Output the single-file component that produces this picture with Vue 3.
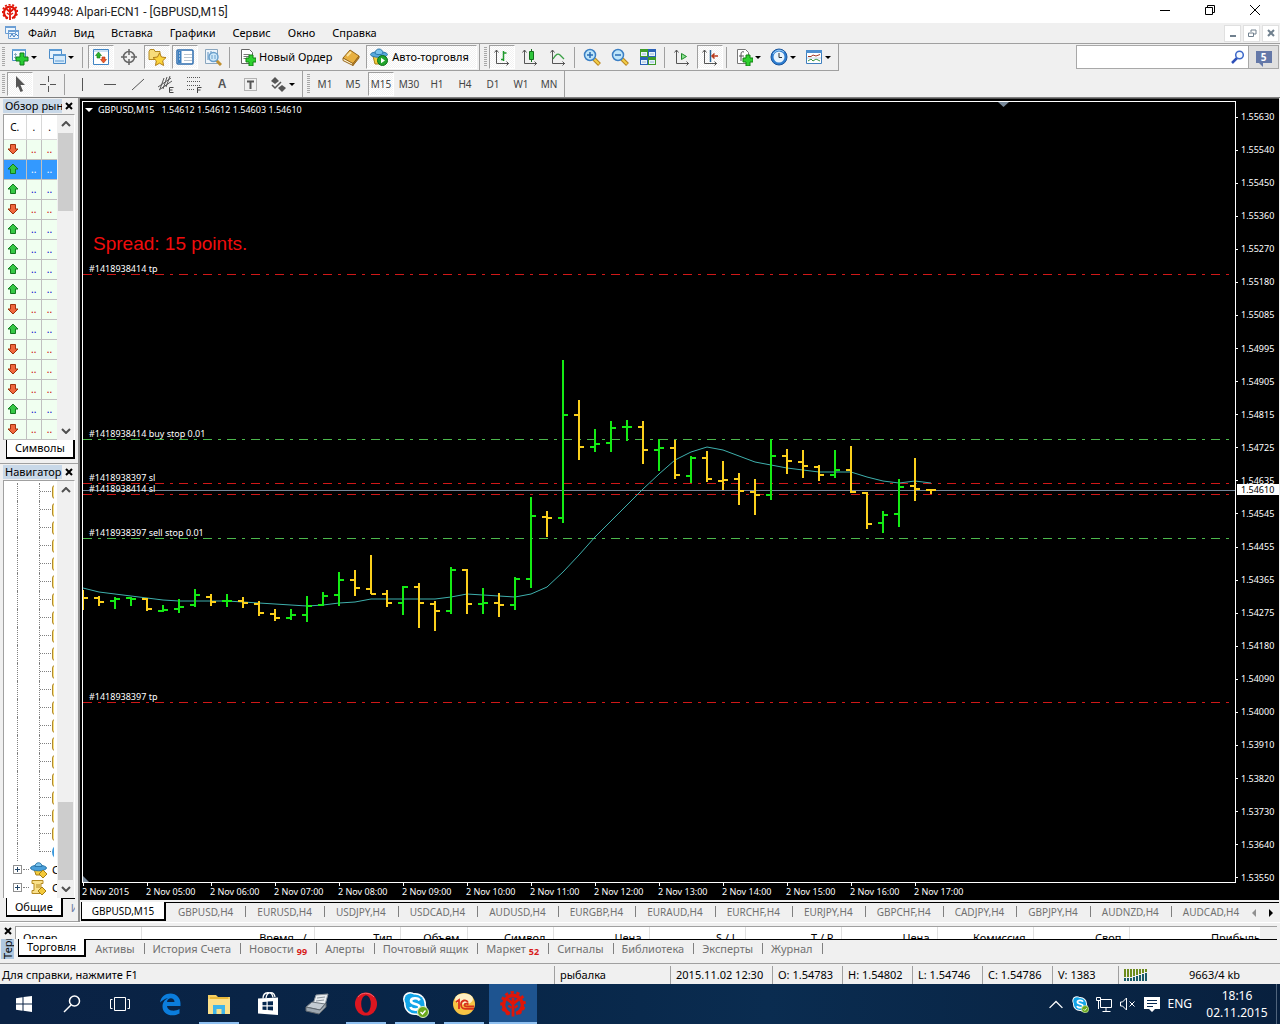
<script setup>
const arrowDown = '<path d="M0 0h6L3 3z" fill="#000"/>'

const axes = '<path d="M3.5 2v13.5H16M1.5 4.5l2-2.5 2 2.5M13.5 13.5l2 2-2 2" fill="none" stroke="#555"/>'
const doc = '<path d="M3.5 1.5h8l3 3v11h-11z" fill="#fff" stroke="#666"/><path d="M5.500 6.500h6M5.500 8.500h6M5.500 10.500h4" stroke="#777"/>'
const plus = '<path d="M11 7h4v3h3v4h-3v4h-4v-4H8v-4h3z" fill="#2ed02e" stroke="#108010"/>'
const lens = '<path d="M11 11l5.500 5.500" stroke="#b98420" stroke-width="4"/><path d="M11 11l5 5" stroke="#f2cf4a" stroke-width="2"/><circle cx="7" cy="7" r="5.500" fill="#bfe6fa" stroke="#3b7fc4" stroke-width="1.500"/>'

const icons = {
  newChart: '<path d="M1.500 1.500h13v11h-13z" fill="#f4faff" stroke="#4b8cc8"/><path d="M1 1h14v2H1z" fill="#6aa5d8"/><path d="M4.500 5v6M3 6.500h3M3 9.500h9" stroke="#8ab" /><path d="M9 5h4v4h4v4h-4v4H9v-4H5V9h4z" fill="#27cc33" stroke="#0d7d18"/>',
  profiles: '<path d="M1.500 1.500h12v9h-12z" fill="#e6f2fc" stroke="#4b8cc8"/><path d="M1 1h13v2H1z" fill="#5c9bd4"/><path d="M5.500 6.500h12v9h-12z" fill="#d6eafa" stroke="#4b8cc8"/><path d="M5 6h13v2H5z" fill="#5c9bd4"/><path d="M7 13h9" stroke="#5c9bd4"/>',
  market: '<path d="M1.500 1.500h15v15h-15z" fill="#fff" stroke="#3f84c4"/><path d="M2 3h14" stroke="#9cc6ea"/><path d="M6.500 4l3 3.500h-1.500V10h-3V7.500H3.500z" fill="#2bb52b" stroke="#15751a" stroke-width=".6"/><path d="M11.500 15l-3-3.500H10V9h3v2.500h1.500z" fill="#f0592a" stroke="#a4330d" stroke-width=".6"/>',
  target: '<circle cx="9" cy="9" r="5.500" fill="none" stroke="#666" stroke-width="1.500"/><path d="M9 1v6M9 11v6M1 9h6M11 9h6" stroke="#666" stroke-width="1.500"/>',
  star: '<path d="M1 3.500l1-2h4l1 2h5v8H1z" fill="#f7dc7a" stroke="#b58a22"/><path d="M11.500 5l2 4 4.500.6-3.300 3.200.9 4.700-4.100-2.300-4 2.300.8-4.700L5 9.600 9.500 9z" fill="#fbd43c" stroke="#b27d14"/>',
  list: '<rect x="1" y="2" width="16" height="14" rx="1" fill="#fff" stroke="#2c6cae" stroke-width="1.500"/><path d="M2 3h3.500v12H2z" fill="#3b7fc0"/><path d="M8 6.500h8M8 9.500h8M8 12.500h8" stroke="#b9c4cf"/><path d="M3 5h1M3 8h1M3 11h1" stroke="#fff"/>',
  tester: '<path d="M1.500 1.500h12v14h-12z" fill="#eef5fb" stroke="#8aa6be"/><path d="M4 4v8M7 3v5M10 4v3" stroke="#5b8fc0"/><path d="M12 12l5 5" stroke="#c09030" stroke-width="3"/><circle cx="9.500" cy="9" r="4.500" fill="#cfe9fa" stroke="#6aa0cc" stroke-width="1.500"/><path d="M8 7v4M11 7v4" stroke="#6aa0cc"/>',
  order: doc + plus,
  book: '<path d="M1 10l7-8 9 6-6 8z" fill="#e8b040" stroke="#96661a"/><path d="M1 10v2.500l10 5v-2z" fill="#fff3cf" stroke="#96661a"/><path d="M11 17.500l6-7.500V8l-6 7.500z" fill="#c48a25" stroke="#96661a"/><path d="M5 8l4-4" stroke="#fbe29a" stroke-width="2"/>',
  robot: '<path d="M3 8l2 8h8l2-8z" fill="#f4cb3a" stroke="#a67f16"/><ellipse cx="9" cy="6.500" rx="8.500" ry="2.800" fill="#58a9dc" stroke="#2b78ac"/><path d="M5 5.500c0-6 8-6 8 0-2 1.500-6 1.500-8 0z" fill="#7cc3ec" stroke="#2b78ac"/><circle cx="12.500" cy="12.500" r="5" fill="#21a52d" stroke="#0d6e18"/><path d="M11 9.800v5.400l4-2.700z" fill="#fff"/>',
  bars: axes + '<path d="M10.500 3v10M10.500 5h3M8 11.500h2.500" stroke="#1f9a2c" stroke-width="1.500" fill="none"/>',
  candles: axes + '<path d="M10.500 1v13" stroke="#14701c"/><path d="M8.500 3.500h4v8h-4z" fill="#2fc63c" stroke="#14701c"/>',
  line: axes + '<path d="M4 11c3-5 5-6 7-4l4 4" stroke="#3aa046" fill="none" stroke-width="1.300"/>',
  zoomIn: lens + '<path d="M4 7h6M7 4v6" stroke="#2b6cb4" stroke-width="1.500"/>',
  zoomOut: lens + '<path d="M4 7h6" stroke="#2b6cb4" stroke-width="1.500"/>',
  tile: '<path d="M1 1h8v8H1z" fill="#3d9c2a"/><path d="M9 1h8v8H9z" fill="#2b62b8"/><path d="M1 9h8v8H1z" fill="#2b62b8"/><path d="M9 9h8v8H9z" fill="#3d9c2a"/><path d="M2 4h6v4H2zM10 4h6v4h-6zM2 12h6v4H2zM10 12h6v4h-6z" fill="#e9f3fc"/><path d="M3 6h4M11 6h4M3 14h4M11 14h4" stroke="#9bb8d4"/>',
  scroll: axes + '<path d="M8.500 5.500v6l5-3z" fill="#8be08f" stroke="#1f8a2a"/>',
  shift: axes + '<path d="M9.500 2v12" stroke="#2a6597" stroke-width="1.500"/><path d="M17 8h-6M13.500 5.500L11 8l2.500 2.500" stroke="#b83a1c" fill="none" stroke-width="1.500"/>',
  indicator: '<path d="M2.500 1.500h8l3 3v11h-11z" fill="#fff" stroke="#777"/><path d="M9 4c-3-1-3 1-3 4v5M4 8h5" stroke="#555" fill="none"/>' + plus,
  clock: '<circle cx="9" cy="9" r="8" fill="#2d7dd0" stroke="#1a559c"/><circle cx="9" cy="9" r="5.500" fill="#e8f4fd"/><path d="M9 5v4.500h3" stroke="#333" fill="none"/><path d="M3 6a7 7 0 0 1 11-2" stroke="#9fd0f6" fill="none"/>',
  template: '<path d="M1.500 2.500h15v13h-15z" fill="#fff" stroke="#3f7fbe"/><path d="M1 2h16v3H1z" fill="#4d8fcf"/><path d="M3 8.500h3l2-1.500 3 1 4-1.500" stroke="#a03828" fill="none"/><path d="M3 13l3-2 2 2 3-2 4 2" stroke="#38923c" fill="none"/><path d="M2 10h14" stroke="#c4d4e4"/>',
  cursor: '<path d="M5 1l9 9H9.500l2.500 6-2.500 1L7 11.200 5 13z" fill="#555"/>',
  cross: '<path d="M9.500 1v6M9.500 11v6M1 9.500h6M11 9.500h6" stroke="#555"/>',
  vline: '<path d="M9.500 3v13" stroke="#555"/>',
  hline: '<path d="M3 9.500h12" stroke="#555"/>',
  trend: '<path d="M3 15L15 4" stroke="#555"/>',
  channel: '<path d="M1 12L14 3M2 15L15 6M3 14L7 3M6 14L10 2M9 12L13 1" stroke="#555"/><path d="M16.500 12.500h-4v5h4M12.500 15h3" stroke="#444" fill="none"/>',
  fibo: '<path d="M2 2.500h13M2 6.500h13M2 10.500h13M2 14.500h8" stroke="#555" stroke-dasharray="1 1"/><path d="M16.500 12.500h-4V18M12.500 15h3" stroke="#444" fill="none"/>',
  label: '<path d="M3.500 3.500h12v12h-12z" fill="none" stroke="#777" stroke-dasharray="1 1"/><path d="M6 6.500h7M9.500 6v8" stroke="#555" stroke-width="2"/>',
  shapes: '<path d="M2 6l4-4 4 4-4 3z" fill="#555"/><path d="M9 13l4-3 4 3-4 4z" fill="#555"/><path d="M3 10l3 3 6-6" stroke="#555" stroke-width="1.500" fill="none"/>',
}

const logo = '<path d="M8 8V16M8 8L4.500 5M8 8l3.500-3M8 4v3" stroke="#e01508" stroke-width="1.800"/><path d="M6 14.200a6 6 0 1 1 4 0" fill="none" stroke="#e01508" stroke-width="2.200"/><path d="M5.300 14.600a7.300 7.300 0 1 1 5.400 0" fill="none" stroke="#e01508" stroke-width="1.800" stroke-dasharray="2 1.700"/><path d="M5 9l2 1.500M11 9l-2 1.500" stroke="#e01508" stroke-width="1.400"/>'

const menu = ['Файл', 'Вид', 'Вставка', 'Графики', 'Сервис', 'Окно', 'Справка']

const panelButtons = [
  { icon: 'market', on: true, label: 'Обзор рынка' },
  { icon: 'target', label: 'Окно данных' },
  { icon: 'star', on: true, label: 'Навигатор' },
  { icon: 'list', on: true, label: 'Терминал' },
  { icon: 'tester', label: 'Тестер стратегий' },
]
const styleButtons = [
  { icon: 'bars', on: true, label: 'Бары' },
  { icon: 'candles', label: 'Свечи' },
  { icon: 'line', label: 'Линия' },
]
const zoomButtons = [
  { icon: 'zoomIn', label: 'Увеличить' },
  { icon: 'zoomOut', label: 'Уменьшить' },
  { icon: 'tile', label: 'Окна мозаикой' },
]
const shiftButtons = [
  { icon: 'scroll', label: 'Автопрокрутка' },
  { icon: 'shift', on: true, label: 'Сдвиг графика' },
]
const dropButtons = [
  { icon: 'indicator', label: 'Индикаторы' },
  { icon: 'clock', label: 'Периоды' },
  { icon: 'template', label: 'Шаблоны' },
]
const drawButtons = ['vline', 'hline', 'trend', 'channel', 'fibo', 'text', 'label', 'shapes']
const periods = ['M1', 'M5', 'M15', 'M30', 'H1', 'H4', 'D1', 'W1', 'MN']

const symbols = 'duuduuuududddud'.split('').map((dir, i) => ({ up: dir === 'u', selected: i === 1 }))
const folders = 20

const prices = [
  '1.55630', '1.55540', '1.55450', '1.55360', '1.55270', '1.55180', '1.55085', '1.54995',
  '1.54905', '1.54815', '1.54725', '1.54635', '1.54545', '1.54455', '1.54365', '1.54275',
  '1.54180', '1.54090', '1.54000', '1.53910', '1.53820', '1.53730', '1.53640', '1.53550',
]
const times = [
  '2 Nov 2015', '2 Nov 05:00', '2 Nov 06:00', '2 Nov 07:00', '2 Nov 08:00', '2 Nov 09:00', '2 Nov 10:00',
  '2 Nov 11:00', '2 Nov 12:00', '2 Nov 13:00', '2 Nov 14:00', '2 Nov 15:00', '2 Nov 16:00', '2 Nov 17:00',
]

// Bars: high, low, open, close (plot offset), rising
const TOP = 102
const STEP = 16
const rawBars = [
  [590, 610, 598, 598, 0], [596, 606, 598, 602, 0], [597, 609, 601, 599, 1], [597, 606, 598, 599, 1],
  [598, 611, 599, 609, 0], [605, 612, 611, 610, 1], [599, 613, 609, 607, 1], [589, 607, 605, 595, 1],
  [594, 606, 597, 602, 0], [594, 607, 601, 601, 1], [597, 608, 601, 603, 0], [601, 616, 604, 613, 0],
  [609, 621, 614, 618, 0], [609, 620, 618, 615, 1], [596, 622, 615, 606, 1], [592, 606, 605, 596, 1],
  [572, 606, 595, 580, 1], [570, 596, 580, 588, 0], [555, 594, 589, 594, 0], [590, 607, 594, 603, 0],
  [586, 615, 603, 587, 1], [583, 628, 587, 603, 0], [601, 631, 604, 611, 0], [567, 614, 611, 570, 1],
  [569, 614, 570, 604, 0], [588, 614, 604, 603, 1], [593, 617, 603, 605, 0], [577, 610, 605, 579, 1],
  [497, 588, 579, 516, 1], [511, 537, 517, 518, 0], [360, 523, 518, 415, 1], [400, 460, 415, 447, 0],
  [429, 452, 447, 444, 1], [421, 452, 443, 428, 1], [420, 441, 427, 427, 1], [421, 464, 427, 450, 0],
  [439, 471, 450, 448, 1], [440, 479, 448, 475, 0], [456, 483, 476, 458, 1], [451, 482, 458, 479, 0],
  [461, 490, 481, 480, 0], [473, 505, 479, 491, 0], [479, 515, 492, 495, 0], [439, 500, 495, 456, 1],
  [449, 474, 456, 461, 0], [450, 478, 462, 466, 0], [465, 481, 467, 475, 0], [450, 478, 475, 470, 1],
  [446, 493, 470, 492, 0], [492, 529, 493, 524, 0], [511, 533, 523, 515, 1], [479, 527, 514, 487, 1],
  [458, 501, 486, 489, 0], [490, 494, 490, 490, 0],
]
const bars = rawBars.map(([high, low, open, close, up], i) => {
  const x = i * STEP
  return {
    d: `M${x} ${high - TOP}V${low - TOP}M${x - 5} ${open - TOP}H${x}M${x} ${close - TOP}H${x + 5}`,
    color: up ? '#14eb14' : '#fbd01c',
  }
})
const average = [
  588, 592, 594, 596, 598, 600, 601, 601, 601, 601, 602, 603, 604, 605, 606, 605, 603, 602, 599, 599, 599,
  599, 599, 597, 594, 595, 596, 597, 594, 587, 572, 555, 537, 521, 505, 489, 474, 460, 452, 447, 450, 456,
  462, 465, 468, 470, 472, 472, 472, 477, 481, 483, 481, 483,
]
const averagePoints = average.map((y, i) => `${i * STEP},${y - TOP}`).join(' ')

const orders = [
  { text: '#1418938414 tp', y: 172, color: '#d01818' },
  { text: '#1418938414 buy stop 0.01', y: 337, color: '#4cb84c' },
  { text: '#1418938397 sl', y: 381, color: '#d01818' },
  { text: '#1418938414 sl', y: 392, color: '#d01818' },
  { text: '#1418938397 sell stop 0.01', y: 436, color: '#4cb84c' },
  { text: '#1418938397 tp', y: 600, color: '#d01818' },
]

const charts = [
  'GBPUSD,H4', 'EURUSD,H4', 'USDJPY,H4', 'USDCAD,H4', 'AUDUSD,H4', 'EURGBP,H4', 'EURAUD,H4',
  'EURCHF,H4', 'EURJPY,H4', 'GBPCHF,H4', 'CADJPY,H4', 'GBPJPY,H4', 'AUDNZD,H4', 'AUDCAD,H4',
]
const columns = [
  { name: 'Ордер', w: 125 }, { name: 'Время   /', w: 173 }, { name: 'Тип', w: 86 }, { name: 'Объем', w: 67 },
  { name: 'Символ', w: 86 }, { name: 'Цена', w: 96 }, { name: 'S / L', w: 96 }, { name: 'T / P', w: 96 },
  { name: 'Цена', w: 96 }, { name: 'Комиссия', w: 96 }, { name: 'Своп', w: 96 },
]
const sections = [
  { name: 'Активы' }, { name: 'История Счета' }, { name: 'Новости', badge: 99 }, { name: 'Алерты' },
  { name: 'Почтовый ящик' }, { name: 'Маркет', badge: 52 }, { name: 'Сигналы' }, { name: 'Библиотека' },
  { name: 'Эксперты' }, { name: 'Журнал' },
]

const skype = '<circle cx="9" cy="9" r="7" fill="#fff"/><circle cx="19" cy="19" r="7" fill="#fff"/><circle cx="14" cy="14" r="11" fill="#fff"/><circle cx="9.500" cy="9.500" r="6" fill="#12a5e8"/><circle cx="18" cy="18" r="6" fill="#12a5e8"/><circle cx="14" cy="14" r="9.500" fill="#12a5e8"/><path d="M18.500 10.500c-1-3-8.500-3-8.500.5 0 4 8.500 2 8.500 6 0 3.500-8 3.500-9 0" fill="none" stroke="#fff" stroke-width="2.600"/><circle cx="22" cy="22" r="5.500" fill="#6aa81c" stroke="#d7ecc0"/><path d="M19.500 22l2 2 3-3.500" fill="none" stroke="#fff" stroke-width="1.300"/>'

const apps = [
  { label: 'Edge', svg: '<path d="M4 12.500C5 6.500 9.500 3.500 14.500 3.500c6 0 10 4.500 10 10v2.500H11c.3 5 7.500 6 12.500 3v4.500c-7.500 4-17 1.500-17-7 0-4 2.500-7 5.500-8.500-3.500 1-6.500 2.700-8 4.500zM11 12h7.500c0-5-7-5-7.500 0z" fill="#0b7ddc"/>' },
  { label: 'Проводник', running: true, svg: '<path d="M3 5h8l2 2h12v17H3z" fill="#f5cf63"/><path d="M3 9h22v15H3z" fill="#fbe08b"/><path d="M5 7h18v2H5z" fill="#e9b93a"/><path d="M8 24v-9h12v9h-3.500v-5h-5v5z" fill="#3eb5ea"/>' },
  { label: 'Магазин', svg: '<path d="M4 8.500l20-1V25L4 23.500z" fill="#fff"/><path d="M9 8.500c0-7 9-8 10-1M12 8c1-7 8-7 9-1" fill="none" stroke="#fff" stroke-width="1.300"/><path d="M8.500 12l4-.3v3.600h-4zM13.700 11.600l5.300-.4v4.100h-5.300zM8.500 16.400h4V20l-4-.3zM13.700 16.400H19v4.200l-5.300-.5z" fill="#04274f"/>' },
  { label: 'Сканер', svg: '<path d="M13 5l12-1-3 11-13 2z" fill="#e8ecef" stroke="#8b949c"/><path d="M3 17l6-5 13 2-5 6z" fill="#c3cbd2" stroke="#6c757d"/><path d="M3 17v4l13 3 7-7v-4l-6 7z" fill="#9da7b0" stroke="#60686f"/><path d="M14 8l8-1M13 11l8-1" stroke="#8b949c"/>' },
  { label: 'Opera', running: true, svg: '<ellipse cx="14" cy="14" rx="11" ry="11.500" fill="#dc1620"/><ellipse cx="14" cy="14" rx="4.800" ry="8.800" fill="#082247"/><path d="M6 7c3-5 12-5 16 0" stroke="#f4606a" fill="none"/>' },
  { label: 'Skype', running: true, svg: skype },
  { label: '1C', running: true, svg: '<circle cx="14" cy="14" r="11" fill="#f6c344"/><ellipse cx="14" cy="9" rx="9" ry="5.500" fill="#fdf0c4"/><path d="M6 12l3-2v9M18 12.500c-1.500-3.500-7-2.500-7 2s3.500 4.300 5 4.300h8M18.500 14.500c-1-1-4-1.500-4 .5 0 1.500 1.500 1.500 2.500 1.500h7" fill="none" stroke="#d8301c" stroke-width="1.800"/>' },
]
</script>

<template>
  <div class="desktop">
    <header class="title-bar">
      <svg class="logo" viewBox="0 0 16 16" v-html="logo" />
      <h1>1449948: Alpari-ECN1 - [GBPUSD,M15]</h1>
      <div class="window-buttons">
        <button aria-label="Свернуть"><svg viewBox="0 0 12 12"><path d="M1 6.500h10" /></svg></button>
        <button aria-label="Развернуть"><svg viewBox="0 0 12 12"><path d="M1.500 3.500h7v7h-7zM3.500 3V1.500h7v7H9" /></svg></button>
        <button aria-label="Закрыть"><svg viewBox="0 0 12 12"><path d="M1 1l10 10M11 1L1 11" /></svg></button>
      </div>
    </header>

    <nav class="menu-bar">
      <svg class="menu-icon" viewBox="0 0 16 16"><path d="M1.500 1.500h10v7h-10zM4.500 5.500h10v8h-10z" fill="#eef6fd" stroke="#6d9fd4" /><path d="M4 5h11v2H4zM1 1h11v2H1z" fill="#6d9fd4" /><path d="M6 12l2-3 2 3 2-3 2 2" fill="none" stroke="#3f7cc0" /></svg>
      <button v-for="m in menu" :key="m">{{ m }}</button>
      <div class="child-buttons">
        <button aria-label="Свернуть график"><svg viewBox="0 0 10 10"><path d="M2 8h6" /></svg></button>
        <button aria-label="Восстановить график"><svg viewBox="0 0 10 10"><path d="M1.500 5h5v3.500h-5zM4 4V2h5v4H7" class="thin" /></svg></button>
        <button aria-label="Закрыть график"><svg viewBox="0 0 10 10"><path d="M2 2l6 6M8 2L2 8" /></svg></button>
      </div>
    </nav>

    <div class="tool-area">
      <div class="bar main-bar">
        <i class="grip" />
        <button class="tool" aria-label="Новый график"><svg viewBox="0 0 18 18" v-html="icons.newChart" /></button>
        <button class="caret" aria-label="Ещё"><svg viewBox="0 0 6 3" v-html="arrowDown" /></button>
        <button class="tool gap" aria-label="Профили"><svg viewBox="0 0 18 18" v-html="icons.profiles" /></button>
        <button class="caret" aria-label="Ещё"><svg viewBox="0 0 6 3" v-html="arrowDown" /></button>
        <i class="sep" />
        <button v-for="b in panelButtons" :key="b.icon" class="tool" :class="{ on: b.on }" :aria-label="b.label"><svg viewBox="0 0 18 18" v-html="icons[b.icon]" /></button>
        <i class="sep" />
        <button class="tool wide"><svg viewBox="0 0 18 18" v-html="icons.order" />Новый Ордер</button>
        <button class="tool" aria-label="Редактор"><svg viewBox="0 0 18 18" v-html="icons.book" /></button>
        <button class="tool wide auto on"><svg viewBox="0 0 18 18" v-html="icons.robot" />Авто-торговля</button>
        <i class="edge" />
        <i class="grip" />
        <button v-for="b in styleButtons" :key="b.icon" class="tool" :class="{ on: b.on }" :aria-label="b.label"><svg viewBox="0 0 18 18" v-html="icons[b.icon]" /></button>
        <i class="sep" />
        <button v-for="b in zoomButtons" :key="b.icon" class="tool" :aria-label="b.label"><svg viewBox="0 0 18 18" v-html="icons[b.icon]" /></button>
        <i class="sep" />
        <button v-for="b in shiftButtons" :key="b.icon" class="tool" :class="{ on: b.on }" :aria-label="b.label"><svg viewBox="0 0 18 18" v-html="icons[b.icon]" /></button>
        <i class="sep" />
        <template v-for="b in dropButtons" :key="b.icon">
          <button class="tool" :aria-label="b.label"><svg viewBox="0 0 18 18" v-html="icons[b.icon]" /></button>
          <button class="caret" aria-label="Ещё"><svg viewBox="0 0 6 3" v-html="arrowDown" /></button>
        </template>
        <i class="edge" />
      </div>
      <div class="search">
        <input type="text" aria-label="Поиск" />
        <svg class="search-icon" viewBox="0 0 14 14"><path d="M1 13l5-5" stroke="#2e50b8" stroke-width="2.500" /><circle cx="8.500" cy="5" r="3.800" fill="#f4f9ff" stroke="#3d68c8" stroke-width="1.500" /></svg>
        <button class="chat" aria-label="Сообщения"><span>5</span></button>
      </div>
      <div class="bar draw-bar">
        <i class="grip" />
        <button class="tool on" aria-label="Курсор"><svg viewBox="0 0 18 18" v-html="icons.cursor" /></button>
        <button class="tool" aria-label="Перекрестие"><svg viewBox="0 0 18 18" v-html="icons.cross" /></button>
        <i class="sep" />
        <button v-for="d in drawButtons" :key="d" class="tool" :aria-label="d">
          <b v-if="d === 'text'">A</b>
          <svg v-else viewBox="0 0 18 18" v-html="icons[d]" />
        </button>
        <button class="caret" aria-label="Ещё"><svg viewBox="0 0 6 3" v-html="arrowDown" /></button>
        <i class="edge" />
        <i class="grip" />
        <button v-for="p in periods" :key="p" class="tool period" :class="{ on: p === 'M15' }">{{ p }}</button>
        <i class="edge" />
      </div>
    </div>

    <main class="workspace">
      <aside class="side">
        <section class="panel">
          <div class="panel-title"><h2>Обзор рынка</h2><button aria-label="Закрыть"><svg viewBox="0 0 8 8"><path d="M1 1l6 6M7 1L1 7" /></svg></button></div>
          <div class="panel-body">
            <table class="symbols">
              <thead><tr><th>С.</th><th>.</th><th>.</th></tr></thead>
              <tbody>
                <tr v-for="(s, i) in symbols" :key="i" :class="{ selected: s.selected, up: s.up }">
                  <td><svg viewBox="0 0 12 12"><path v-if="s.up" d="M6 1l5 5H8.500v4.500h-5V6H1z" fill="#35c845" stroke="#127a20" /><path v-else d="M6 11L1 6h2.500V1.500h5V6H11z" fill="#f0683c" stroke="#a0320e" /></svg></td>
                  <td>..</td><td>..</td>
                </tr>
              </tbody>
            </table>
            <div class="scroll"><svg viewBox="0 0 10 6"><path d="M1 5l4-4 4 4" /></svg><i class="thumb" /><i class="rest" /><svg viewBox="0 0 10 6"><path d="M1 1l4 4 4-4" /></svg></div>
          </div>
          <div class="tabs side-tabs"><button class="tab active">Символы</button><i class="tab-line" /></div>
        </section>
        <section class="panel grow">
          <div class="panel-title"><h2>Навигатор</h2><button aria-label="Закрыть"><svg viewBox="0 0 8 8"><path d="M1 1l6 6M7 1L1 7" /></svg></button></div>
          <div class="panel-body">
            <ul class="tree">
              <li v-for="n in folders" :key="n" class="leaf"><i class="folder" /></li>
              <li class="leaf last"><i class="globe" /></li>
              <li class="node"><i class="plus" /><i class="dots" /><svg viewBox="0 0 18 18"><path d="M4 8l2 6h6l2-6z" fill="#f4cb3a" stroke="#a67f16" /><ellipse cx="8.500" cy="7" rx="8" ry="2.800" fill="#4a9fda" stroke="#2b78ac" /><path d="M5 5.500c0-5 7-5 7 0z" fill="#7cc3ec" stroke="#2b78ac" /><path d="M13 9l4 4-4 4-4-4z" fill="#f4c93a" stroke="#a67f16" /></svg>С</li>
              <li class="node"><i class="plus" /><i class="dots" /><svg viewBox="0 0 18 18"><path d="M2 1.500h11v3h-2v7h2v3H2v-3h2v-7H2z" fill="#f9e08a" stroke="#b58a22" /><path d="M6 6h4M6 8h4" stroke="#b58a22" /><path d="M12 8l4 4-4 4-4-4z" fill="#f4c93a" stroke="#a67f16" /></svg>С</li>
            </ul>
            <div class="scroll"><svg viewBox="0 0 10 6"><path d="M1 5l4-4 4 4" /></svg><i class="rest" /><i class="thumb" /><svg viewBox="0 0 10 6"><path d="M1 1l4 4 4-4" /></svg></div>
          </div>
          <div class="tabs side-tabs"><button class="tab active">Общие</button><button class="tab cut">Избранное</button></div>
        </section>
      </aside>

      <section class="chart-window">
        <div class="chart">
          <div class="plot">
            <svg class="canvas" width="100%" height="100%">
              <path d="M2 6h8l-4 4z" fill="#fff" />
              <text class="info" x="15" y="11">GBPUSD,M15&#160;&#160; 1.54612 1.54612 1.54603 1.54610</text>
              <text class="spread" x="10" y="148">Spread: 15 points.</text>
              <path d="M915 0h11l-5.500 5z" fill="#778899" />
              <line v-for="o in orders" :key="o.y" x1="0" x2="99.500%" :y1="o.y" :y2="o.y" :stroke="o.color" stroke-dasharray="9 6 3 6" transform="translate(0 .5)" />
              <line x1="0" x2="100%" y1="388.500" y2="388.500" stroke="#778899" />
              <polyline :points="averagePoints" fill="none" stroke="#3fb0ad" />
              <path v-for="(b, i) in bars" :key="i" :d="b.d" :stroke="b.color" stroke-width="2" fill="none" />
              <text v-for="o in orders" :key="o.text" class="info" x="6" :y="o.y - 2">{{ o.text }}</text>
            </svg>
            <i class="corner" />
          </div>
          <div class="prices">
            <span v-for="p in prices" :key="p">{{ p }}</span>
            <strong>1.54610</strong>
          </div>
          <div class="times"><span v-for="t in times" :key="t">{{ t }}</span></div>
        </div>
        <div class="tabs chart-tabs">
          <button class="tab active">GBPUSD,M15</button>
          <div class="tab-strip"><button v-for="c in charts" :key="c" class="tab">{{ c }}</button></div>
          <button class="arrow dim" aria-label="Назад"><svg viewBox="0 0 4 8"><path d="M4 0v8L0 4z" /></svg></button>
          <button class="arrow" aria-label="Вперёд"><svg viewBox="0 0 4 8"><path d="M0 0v8l4-4z" /></svg></button>
        </div>
      </section>
    </main>

    <section class="terminal">
      <div class="terminal-side"><button aria-label="Закрыть"><svg viewBox="0 0 8 8"><path d="M1 1l6 6M7 1L1 7" /></svg></button><h2>Терминал</h2></div>
      <div class="terminal-main">
        <div class="orders">
          <table>
            <colgroup><col v-for="(c, i) in columns" :key="i" :style="{ width: c.w + 'px' }" /><col /></colgroup>
            <thead><tr><th v-for="(c, i) in columns" :key="i">{{ c.name }}</th><th>Прибыль</th></tr></thead>
          </table>
        </div>
        <div class="tabs terminal-tabs">
          <button class="tab active">Торговля</button>
          <button v-for="s in sections" :key="s.name" class="tab">{{ s.name }}<sub v-if="s.badge">{{ s.badge }}</sub></button>
          <i class="tab-line" />
        </div>
      </div>
    </section>

    <footer class="status">
      <span class="hint">Для справки, нажмите F1</span>
      <span class="profile">рыбалка</span>
      <span class="date">2015.11.02 12:30</span>
      <span class="value">O: 1.54783</span><span class="value">H: 1.54802</span><span class="value">L: 1.54746</span><span class="value">C: 1.54786</span>
      <span class="volume">V: 1383</span>
      <span class="traffic"><svg viewBox="0 0 24 12"><path d="M0 0h2v8H0zM3 0h2v8H3zM6 0h2v8H6zM9 0h2v7H9zM12 0h2v6h-2zM15 0h2v5h-2zM18 0h2v4h-2zM21 0h2v3h-2z" fill="#6d8c1c" /><path d="M0 9h2v3H0zM3 9h2v3H3zM6 9h2v3H6zM9 8h2v4H9zM12 7h2v5h-2zM15 6h2v6h-2zM18 5h2v7h-2zM21 4h2v8h-2z" fill="#185a68" /></svg><em>9663/4 kb</em></span>
    </footer>

    <nav class="taskbar">
      <button class="sys" aria-label="Пуск"><svg viewBox="0 0 28 28"><path d="M6 8.300l6.500-1v6.200H6zM13.500 7.100L22 6v7.500h-8.500zM6 14.500h6.500v6.200l-6.500-1zM13.500 14.500H22V22l-8.500-1.200z" fill="#fff" /></svg></button>
      <button class="sys" aria-label="Поиск"><svg viewBox="0 0 28 28"><circle cx="16.500" cy="11" r="5" fill="none" stroke="#fff" stroke-width="1.500" /><path d="M13 15l-7 7" stroke="#fff" stroke-width="1.500" /></svg></button>
      <button class="sys last" aria-label="Представление задач"><svg viewBox="0 0 28 28"><path d="M8.500 7.500h11v13h-11zM6.500 9.500h-2v9h2M21.500 9.500h2v9h-2" fill="none" stroke="#fff" /></svg></button>
      <button v-for="a in apps" :key="a.label" class="app" :class="{ running: a.running }" :aria-label="a.label"><svg viewBox="0 0 28 28" v-html="a.svg" /></button>
      <button class="app running current" aria-label="Alpari"><svg viewBox="-1 -1 18 18" v-html="logo" /></button>
      <div class="tray">
        <svg class="up" viewBox="0 0 14 14"><path d="M2 10l5-5 5 5" /></svg>
        <svg class="skype" viewBox="0 0 28 28" v-html="skype" />
        <svg viewBox="0 0 18 18"><path d="M5.500 4.500h11v8h-11zM11 13v3M7.500 16.500h8M1.500 2.500h4v3h-4zM3.500 6v8" /></svg>
        <svg viewBox="0 0 18 18"><path d="M1.500 7h2l4-4v12l-4-4h-2zM10.500 6.500l5 5M15.500 6.500l-5 5" /></svg>
        <svg viewBox="0 0 18 18"><path d="M1 2h16v12h-5l-3 3-3-3H1z" fill="#fff" stroke="none" /><path d="M4 5.500h10M4 8.500h10M4 11.500h6" stroke="#04274f" /></svg>
        <span class="lang">ENG</span>
        <time>18:16<br />02.11.2015</time>
      </div>
    </nav>
  </div>
</template>

<style>
body { margin: 0; }
</style>

<style scoped>
* { box-sizing: border-box; }
.desktop {
  display: flex; flex-direction: column; min-height: 100vh; background: #f0f0f0; color: #000;
  font: 11px/16px "Noto Sans", "Open Sans", sans-serif;
}
button { border: 0; padding: 0; margin: 0; background: none; color: inherit; font: inherit; }
h1, h2 { margin: 0; font: inherit; }
i { font-style: normal; display: block; }
svg { display: block; flex: none; }

.title-bar { display: flex; align-items: center; height: 23px; background: #fff; padding-left: 2px; }
.logo { width: 16px; height: 16px; margin-right: 5px; }
.title-bar h1 { font: 12px/16px Roboto, "Noto Sans", sans-serif; color: #222; white-space: nowrap; }
.window-buttons { display: flex; margin-left: auto; margin-top: -3px; padding-right: 3px; }
.window-buttons button { width: 45px; display: flex; justify-content: center; }
.window-buttons svg { width: 12px; height: 12px; fill: none; stroke: #000; }

.menu-bar { display: flex; align-items: center; height: 21px; border-bottom: 1px solid #a0a0a0; padding-left: 4px; gap: 17px; }
.menu-icon { width: 16px; height: 16px; margin-right: -9px; }
.child-buttons { display: flex; gap: 2px; margin-left: auto; padding-right: 1px; }
.child-buttons button { width: 17px; height: 17px; background: #fff; border: 1px solid #e0e0e0; display: flex; align-items: center; justify-content: center; }
.child-buttons svg { width: 10px; height: 10px; fill: none; stroke: #70808e; stroke-width: 2; }
.child-buttons .thin { stroke-width: 1; }

.tool-area { display: grid; grid-template-columns: 1fr auto; grid-template-rows: 27px 26px; border-bottom: 1px solid #808080; }
.bar { display: flex; align-items: center; justify-self: start; gap: 2px; }
.main-bar { border-bottom: 1px solid #a0a0a0; }
.draw-bar { grid-column: 1 / 3; }
.grip { width: 3px; height: 20px; margin-left: 2px; background: repeating-linear-gradient(#a8a8a8 0 1px, #f0f0f0 1px 2px); }
.tool { width: 26px; height: 24px; display: flex; align-items: center; justify-content: center; border: 1px solid transparent; }
.tool.gap { margin-left: 2px; }
.tool.on { background: repeating-conic-gradient(#fff 0 25%, #f2f2f2 0 50%) 0 0 / 2px 2px; border-color: #a0a0a0 #fff #fff #a0a0a0; }
.tool svg { width: 18px; height: 18px; }
.tool.wide { width: auto; padding: 0 3px; gap: 3px; white-space: nowrap; }
.tool.auto { min-width: 111px; justify-content: flex-start; gap: 4px; }
.tool b { font: bold 12px "Liberation Sans", sans-serif; color: #555; }
.period { font-size: 10px; color: #444; }
.caret { width: 8px; margin: 0 2px 0 -5px; display: flex; justify-content: center; }
.caret svg { width: 6px; height: 3px; }
.sep { width: 1px; height: 21px; margin: 0 2px 0 1px; background: #a0a0a0; }
.caret + .sep { margin: 0 3px; }
.edge { width: 1px; height: 26px; background: #a0a0a0; }
.caret + .edge { margin-left: 2px; }
.search { position: relative; display: flex; width: 203px; height: 24px; margin: 1px 1px 0 0; border: 1px solid #a8a8a8; background: #fff; }
.search input { flex: 1; min-width: 0; border: 0; background: none; padding: 0 20px 0 4px; outline: 0; }
.search-icon { position: absolute; right: 33px; top: 4px; width: 14px; height: 14px; }
.chat { width: 30px; background: #e0e0e0; border-left: 1px solid #a8a8a8; display: flex; justify-content: center; align-items: center; }
.chat span { position: relative; width: 16px; height: 12px; background: #6478a8; color: #fff; font-weight: bold; font-size: 10px; line-height: 12px; }
.chat span::after { content: ""; position: absolute; left: 3px; top: 12px; border: 2px solid transparent; border-top-color: #6478a8; border-right-color: #6478a8; }

.workspace { flex: 1; display: flex; min-height: 0; }
.side { width: 80px; flex: none; display: flex; flex-direction: column; border-right: 2px solid #909090; }
.panel { display: flex; flex-direction: column; padding: 0 3px 4px 3px; border-bottom: 1px solid #a0a0a0; }
.panel.grow { flex: 1; min-height: 0; }
.panel-title { display: flex; height: 16px; align-items: center; }
.panel-title h2 { flex: 1; overflow: hidden; white-space: nowrap; line-height: 14px; padding-left: 2px; background: #c8d8e8; }
.panel-title button { width: 13px; display: flex; justify-content: center; }
.panel-title svg, .terminal-side svg { width: 8px; height: 8px; stroke: #000; stroke-width: 2; }
.panel-body { display: flex; flex: 1; min-height: 0; border: 1px solid #a0a0a0; border-right-color: #fff; border-bottom: 0; background: #fff; overflow: hidden; }
.symbols { flex: 1; border-collapse: collapse; table-layout: fixed; width: 54px; font-size: 10px; }
.symbols th { height: 24px; font-weight: normal; padding: 0; border: 1px solid #d8d8d8; border-width: 0 0 1px 1px; }
.symbols td { height: 20px; padding: 0; text-align: center; background: #f0fff0; border: 1px solid #c0c0c0; border-width: 0 0 1px 1px; color: #c00; line-height: 12px; }
.symbols th:first-child, .symbols td:first-child { width: 22px; border-left: 0; }
.symbols td svg { width: 12px; height: 12px; margin: 0 auto 0 3px; }
.symbols .up td { color: #00c; }
.symbols .selected td { background: #3399ff; color: #fff; }
.scroll { width: 17px; background: #f0f0f0; display: flex; flex-direction: column; align-items: center; padding: 6px 0; gap: 6px; }
.scroll svg { width: 10px; height: 6px; fill: none; stroke: #505050; stroke-width: 2; }
.thumb { width: 15px; height: 78px; background: #cdcdcd; }
.rest { flex: 1; }

.tabs { display: flex; }
.tab { padding: 0 8px; white-space: nowrap; border-top: 1px solid #000; color: #707070; position: relative; }
.tab.active { background: #fff; color: #000; border: 1px solid #000; border-width: 0 2px 2px 1px; }
.tab-line { flex: 1; border-top: 1px solid #000; }
.side-tabs { height: 19px; padding-left: 3px; overflow: hidden; }
.side-tabs .tab.cut { flex: 1; min-width: 0; overflow: hidden; color: #7080a8; }

.tree { flex: 1; list-style: none; margin: 0; padding: 2px 0 0; overflow: hidden; min-width: 0; }
.tree li { height: 18px; display: flex; align-items: center; }
.tree .leaf { margin: 0 3px 0 13px; border-left: 1px dotted #808080; overflow: hidden; }
.leaf::before { content: ""; flex: none; width: 21px; height: 18px; border-right: 1px dotted #808080; }
.leaf::after { content: ""; flex: none; width: 11px; border-top: 1px dotted #808080; order: 1; }
.leaf i { order: 2; margin-left: 1px; width: 12px; height: 14px; flex: none; }
.folder { border: 1px solid #b08a30; border-radius: 3px; background: #f8e080; }
.leaf.last::before { height: 9px; align-self: flex-start; }
.globe { border-radius: 50%; background: #3a98dc; }
.node { padding-left: 9px; }
.node svg { width: 18px; height: 18px; margin-right: 4px; }
.dots { width: 6px; flex: none; margin: 0 1px 0 1px; border-top: 1px dotted #808080; }
.plus { width: 9px; height: 9px; flex: none; border: 1px solid #909090; background: linear-gradient(#246, #246) center / 5px 1px no-repeat, linear-gradient(#246, #246) center / 1px 5px no-repeat, #fff; }

.chart-window { flex: 1; min-width: 0; display: flex; flex-direction: column; padding: 0 1px 0 0; }
.chart { flex: 1; background: #000; color: #fff; display: grid; grid-template-columns: 1fr 43px; grid-template-rows: 1fr 17px; padding: 2px 0 0 2px; font-size: 9px; line-height: 12px; border-top: 1px solid #505050; }
.plot { border: 1px solid #fff; position: relative; min-height: 0; }
.canvas { position: absolute; inset: 0; }
.info { fill: #fff; font-size: 9px; }
.spread { fill: #f00c0c; font: 19px "Liberation Sans", sans-serif; }
.corner { position: absolute; left: 0; bottom: 0; border: 3px solid transparent; border-left-color: #778899; border-bottom-color: #778899; }
.prices { position: relative; display: flex; flex-direction: column; justify-content: space-between; padding-top: 10px; }
.prices span { padding-left: 5px; display: flex; align-items: center; height: 12px; margin-bottom: -1px; }
.prices span::before { content: ""; width: 3px; height: 1px; background: #fff; margin: 0 3px 0 -6px; }
.prices strong { position: absolute; left: 1px; right: 0; top: 383px; background: #fff; color: #000; font-weight: normal; padding-left: 4px; height: 11px; line-height: 11px; }
.times { display: flex; overflow: hidden; grid-column: 1 / 3; }
.times span { width: 64px; flex: none; white-space: nowrap; line-height: 13px; background: linear-gradient(#fff, #fff) 1px 0 / 1px 3px no-repeat; padding-top: 2px; }

.chart-tabs { height: 22px; padding-top: 2px; font-size: 10px; }
.chart-tabs .tab.active { width: 85px; height: 19px; margin-left: 1px; }
.tab-strip { flex: 1; min-width: 0; overflow: hidden; display: flex; border-top: 1px solid #000; }
.tab-strip .tab { border-top: 0; padding: 0 12px; height: 18px; }
.tab-strip .tab + .tab::before, .terminal-tabs .tab + .tab::after { content: ""; position: absolute; left: 0; top: 3px; width: 1px; height: 11px; background: #808080; }
.arrow { width: 17px; border-top: 1px solid #000; display: flex; justify-content: center; align-items: center; }
.arrow svg { width: 4px; height: 8px; }
.arrow.dim { fill: #909090; }

.terminal { display: flex; height: 42px; border-top: 1px solid #fff; border-bottom: 1px solid #a0a0a0; padding-top: 3px; }
.terminal-side { width: 15px; display: flex; flex-direction: column; align-items: center; overflow: hidden; padding-top: 1px; gap: 4px; margin-bottom: 3px; }
.terminal-side button { height: 8px; flex: none; }
.terminal-side h2 { writing-mode: vertical-rl; transform: rotate(180deg); background: #b0c8e0; width: 13px; line-height: 13px; height: 20px; overflow: hidden; }
.terminal-main { flex: 1; min-width: 0; padding-right: 3px; }
.orders { height: 13px; overflow: hidden; border-top: 1px solid #a0a0a0; border-left: 1px solid #a0a0a0; padding-right: 17px; }
.orders table { width: 100%; table-layout: fixed; border-collapse: collapse; background: #fff; }
.orders th { height: 22px; padding: 0 7px; font-weight: normal; text-align: right; border-right: 1px solid #e0e0e0; white-space: pre; overflow: hidden; }
.orders th:first-child { text-align: left; }
.orders th:last-child { padding-right: 0; border-right: 0; }
.terminal-tabs { height: 18px; padding-left: 3px; }
.terminal-tabs .tab { padding: 0 9px; line-height: 18px; }
.terminal-tabs .tab.active { padding: 0 8px; line-height: 16px; }
.terminal-tabs .tab.active + .tab::after { display: none; }
.terminal-tabs .tab-line { position: relative; }
.terminal-tabs .tab-line::before { content: ""; position: absolute; left: 0; top: 3px; width: 1px; height: 11px; background: #808080; }
sub { color: #d81c1c; font-size: 9px; font-weight: bold; line-height: 9px; margin-left: 3px; vertical-align: -2px; }

.status { display: flex; height: 20px; line-height: 20px; }
.status span { border-left: 1px solid #a0a0a0; padding-left: 5px; white-space: nowrap; margin-top: 2px; line-height: 18px; }
.status .hint { flex: 1; border: 0; padding-left: 2px; }
.profile { width: 116px; }
.date { width: 102px; }
.value { width: 70px; }
.volume { width: 66px; }
.traffic { width: 162px; display: flex; align-items: center; }
.traffic svg { width: 24px; height: 12px; }
.traffic em { font-style: normal; margin-left: 41px; }

.taskbar { display: flex; height: 40px; background: linear-gradient(90deg, #0a2244, #082648 40%, #0a2c50 60%, #08203e); color: #fff; }
.taskbar button { width: 48px; display: flex; align-items: center; justify-content: center; position: relative; margin-right: 1px; }
.taskbar .sys { margin-right: 0; }
.taskbar .sys.last { margin-right: 2px; }
.taskbar button svg { width: 28px; height: 28px; }
.running::after { content: ""; position: absolute; left: 4px; right: 4px; bottom: 0; height: 2px; background: #8fc0f0; }
.taskbar .current { background: #1e5490; }
.current::after { left: 0; right: 0; }
.tray { margin-left: auto; display: flex; align-items: center; gap: 6px; font-size: 12px; padding-right: 3px; }
.tray svg { width: 18px; height: 18px; fill: none; stroke: #fff; }
.tray .skype { stroke: none; }
.tray time { width: 79px; line-height: 17px; text-align: center; border-right: 1px solid #50647c; height: 40px; padding-top: 3px; }
</style>
